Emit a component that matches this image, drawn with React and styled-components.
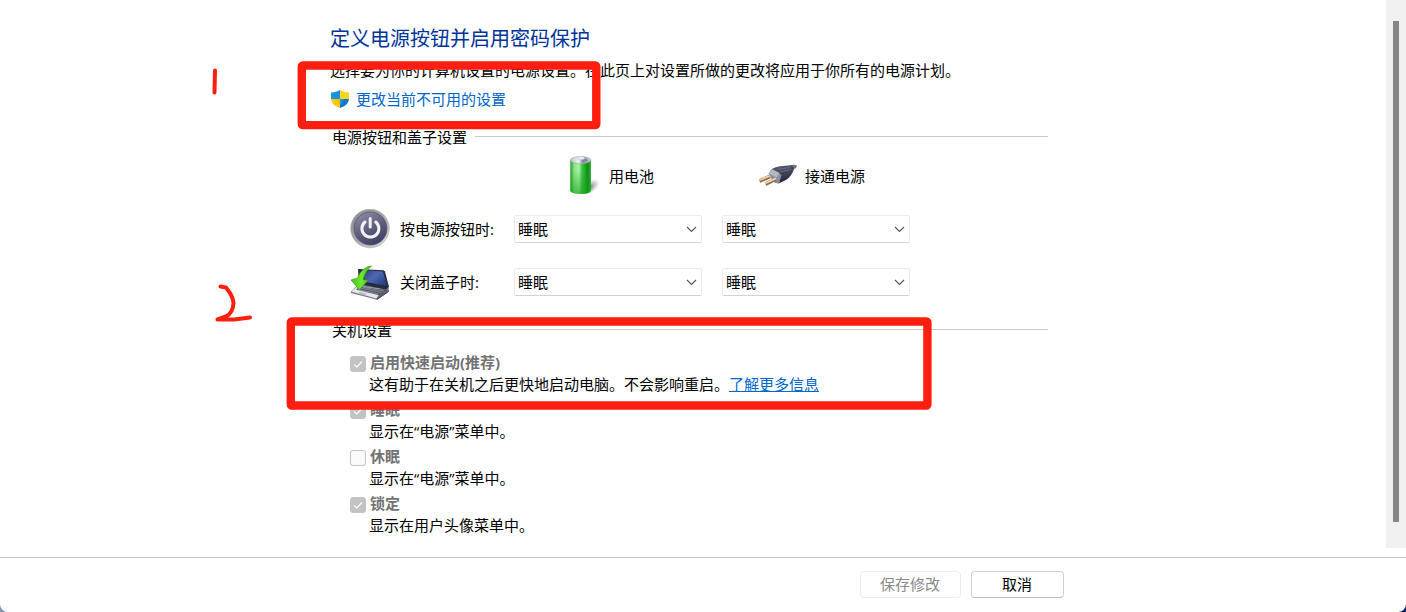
import React, { useId } from "react";
import styled, { createGlobalStyle } from "styled-components";

const GlobalStyle = createGlobalStyle`
  * { box-sizing: border-box; }
  body {
    margin: 0;
    background: linear-gradient(90deg, #8496ab 0 50%, #0b2268 50% 100%);
    color: #000;
    font-family: "Open Sans", "Noto Sans CJK SC", sans-serif;
    font-size: 15px;
    line-height: 20px;
  }
  button, select { font: inherit; }
  h1, h2, p { margin: 0; font-weight: 400; }
`;

const Window = styled.div`
  position: relative;
  display: flex;
  flex-direction: column;
  min-height: 100vh;
  background: #fff;
  border-radius: 0 0 8px 8px;
  overflow: hidden;
`;

const Body = styled.div`
  flex: 1;
  display: flex;
  margin-bottom: 9px;
`;

const Content = styled.main`
  flex: 1;
  padding: 25px 20px 12px 330px;
`;

const Column = styled.div`
  max-width: 718px;
`;

const ScrollTrack = styled.div`
  width: 20px;
  padding: 21px 7px 26px;
  background: #f0f0f0;
  display: flex;
`;

const ScrollThumb = styled.div`
  flex: 1;
  background: #858585;
`;

const Title = styled.h1`
  font-size: 20px;
  line-height: 28px;
  color: #003399;
`;

const Intro = styled.p`
  margin-top: 7px;
  white-space: nowrap;
`;

const AdminLink = styled.a`
  display: flex;
  align-items: center;
  gap: 6px;
  width: max-content;
  margin-top: 9px;
  color: #0066cc;
  text-decoration: none;
`;

const SectionTitle = styled.h2`
  display: flex;
  gap: 8px;
  margin-top: 18px;
  padding-left: 2px;
  font-size: 15px;
  line-height: 20px;

  &::after {
    content: "";
    flex: 1;
    height: 1px;
    margin-top: 9px;
    background: #cacaca;
  }
`;

const PowerGrid = styled.div`
  display: grid;
  grid-template-columns: 144px 188px 188px;
  grid-template-rows: 40px 40px 40px;
  column-gap: 20px;
  row-gap: 13px;
  align-items: center;
  margin-top: 9px;
  padding-left: 20px;
`;

const SourceHeading = styled.div`
  grid-column: ${(p) => p.$column};
  display: flex;
  align-items: center;
  gap: 7px;
  padding-left: ${(p) => p.$indent}px;
`;

const ActionLabel = styled.div`
  display: flex;
  align-items: center;
  gap: 10px;
  white-space: nowrap;
`;

const SelectBox = styled.div`
  display: grid;
  align-items: center;

  & > * { grid-area: 1 / 1; }
  & > svg { justify-self: end; margin-right: 5px; pointer-events: none; }
`;

const Select = styled.select`
  appearance: none;
  width: 100%;
  height: 28px;
  padding: 0 24px 0 3px;
  border: 1px solid #ececec;
  border-bottom-color: #d2d2d2;
  border-radius: 2px;
  background: #fff;
  color: #000;
`;

const OptionList = styled.div`
  display: grid;
  gap: 4px;
  margin-top: 12px;
  padding-left: 20px;
`;

const Option = styled.div`
  display: grid;
  grid-template-columns: 16px 1fr;
  column-gap: 4px;
  row-gap: 1px;
  align-items: center;
  line-height: 21px;
`;

const Checkbox = styled.input`
  appearance: none;
  width: 16px;
  height: 16px;
  margin: 2px 0 0;
  border: 1px solid #c3c3c3;
  border-radius: 3px;
  background: #fafafa;
  grid-area: 1 / 1;

  &:checked { background: #c3c3c3; }
`;

const Tick = styled.svg`
  grid-area: 1 / 1;
  margin-top: 2px;
  pointer-events: none;
`;

const OptionLabel = styled.label`
  grid-area: 1 / 2;
  color: #737373;
  font-weight: 700;
`;

const OptionNote = styled.p`
  grid-column: 2;
  margin-left: -1px;
`;

const TextLink = styled.a`
  color: #0066cc;
  text-decoration: underline;
`;

const Footer = styled.footer`
  display: flex;
  gap: 10px;
  padding: 13px 342px 14px 0;
  justify-content: flex-end;
  border-top: 1px solid #cacaca;
`;

const Button = styled.button`
  width: ${(p) => p.$width}px;
  height: 27px;
  padding: 0 1px 2px 0;
  border: 1px solid #d0d0d0;
  border-bottom-color: #bababa;
  border-radius: 4px;
  background: #fff;
  color: #000;

  &:disabled {
    border-color: #ededed;
    color: #8a8a8a;
  }
`;

const Marks = styled.svg`
  position: absolute;
  top: 0;
  left: 0;
  pointer-events: none;
`;

function ShieldIcon() {
  return (
    <svg width="20" height="20" viewBox="0 0 20 20" aria-hidden="true">
      <path d="M10 1C7.500 2.700 4.500 3.400 1 3.400V10H10Z" fill="#1593dc" />
      <path d="M10 1C12.500 2.700 15.500 3.400 19 3.400V10H10Z" fill="#ffd51c" />
      <path d="M1 10C1.600 14.500 5 17.500 10 19V10Z" fill="#ffc91a" />
      <path d="M19 10C18.400 14.500 15 17.500 10 19V10Z" fill="#0f79c8" />
      <path d="M10 10H14.500L10 17Z" fill="#35a8ea" opacity=".5" />
      <path d="M10 10H5L10 17Z" fill="#f5b400" opacity=".6" />
    </svg>
  );
}

function BatteryIcon() {
  return (
    <svg width="40" height="40" viewBox="0 0 40 40" aria-hidden="true">
      <defs>
        <linearGradient id="cell">
          <stop offset="0" stopColor="#2c9a32" />
          <stop offset=".2" stopColor="#8be68a" />
          <stop offset=".42" stopColor="#a9f2a5" />
          <stop offset=".55" stopColor="#45c748" />
          <stop offset=".85" stopColor="#0b8a12" />
          <stop offset="1" stopColor="#3cb83e" />
        </linearGradient>
        <linearGradient id="cellShade" x2="0" y2="1">
          <stop offset=".3" stopColor="#18a51d" stopOpacity="0" />
          <stop offset="1" stopColor="#18a51d" stopOpacity=".65" />
        </linearGradient>
        <linearGradient id="cap">
          <stop offset="0" stopColor="#b9bcc6" />
          <stop offset=".4" stopColor="#f5f5fa" />
          <stop offset=".6" stopColor="#9295ab" />
          <stop offset="1" stopColor="#d2d4df" />
        </linearGradient>
        <radialGradient id="cellShadow">
          <stop offset="0" stopColor="#555" stopOpacity=".8" />
          <stop offset="1" stopColor="#888" stopOpacity="0" />
        </radialGradient>
      </defs>
      <ellipse cx="28" cy="31" rx="11" ry="6" fill="url(#cellShadow)" transform="rotate(-35 28 31)" />
      <path d="M8.300 4V35Q10 38 18.500 38T29 35V4Z" fill="url(#cell)" />
      <path d="M8.300 4V35Q10 38 18.500 38T29 35V4Z" fill="url(#cellShade)" />
      <ellipse cx="18.600" cy="4" rx="10.300" ry="3.500" fill="url(#cap)" stroke="#a3aaa8" strokeWidth=".6" />
      <path d="M15.500 1Q18.500-.5 22.500 1V3Q18.500 4.500 15.500 3Z" fill="#e9eaf2" stroke="#a6a8b8" strokeWidth=".4" />
      <path d="M19.500 5L24.500 2.300L26.500 4.800L21.500 6.700Z" fill="#777b99" opacity=".7" />
    </svg>
  );
}

function PlugIcon() {
  return (
    <svg width="40" height="40" viewBox="0 0 40 40" aria-hidden="true">
      <defs>
        <linearGradient id="plug" x1=".3" y1="0" x2=".6" y2="1">
          <stop offset="0" stopColor="#5c6075" />
          <stop offset=".5" stopColor="#3f4257" />
          <stop offset="1" stopColor="#202234" />
        </linearGradient>
      </defs>
      <path d="M31 10Q35 8 39 9.500L38 12L33 15Z" fill="#747474" />
      <path d="M13 13.500Q17 10.500 24 10L33 9.200Q36.500 10 36 13Q34 20 28 24L20.500 27.500L17 20Z" fill="url(#plug)" />
      <path d="M10.500 17.500L13.500 13L18.500 15.500L23.500 19L21 27.500L17 27L13 22Z" fill="#8b8fa1" />
      <path d="M10.500 17.500L13.500 13L21.500 17L18.500 21.500Z" fill="#b3b6c5" />
      <path d="M1.500 25L12 20.500" stroke="#8a6040" strokeWidth="3.600" />
      <path d="M1.200 24.300L12 19.800" stroke="#ecd0a2" strokeWidth="1.900" />
      <path d="M7.500 28.200L18 23" stroke="#8a6040" strokeWidth="3.600" />
      <path d="M7.200 27.500L18 22.300" stroke="#f0d5aa" strokeWidth="1.900" />
      <path d="M20 13.500L32 11.500M22 16L33 13.500" stroke="#858aa0" strokeWidth=".7" opacity=".7" />
    </svg>
  );
}

function PowerIcon() {
  return (
    <svg width="40" height="40" viewBox="0 0 40 40" aria-hidden="true">
      <defs>
        <linearGradient id="rim" x2="1" y2="1">
          <stop offset="0" stopColor="#858585" />
          <stop offset=".5" stopColor="#a8a8a8" />
          <stop offset="1" stopColor="#e2e2e2" />
        </linearGradient>
        <linearGradient id="face" x1=".2" y1="0" x2=".7" y2="1">
          <stop offset="0" stopColor="#8b8ba7" />
          <stop offset=".5" stopColor="#60607f" />
          <stop offset="1" stopColor="#3d3d62" />
        </linearGradient>
      </defs>
      <circle cx="20" cy="19.500" r="19.300" fill="url(#rim)" stroke="#aaa" strokeWidth=".6" />
      <circle cx="20.500" cy="19.500" r="16.500" fill="url(#face)" stroke="#555573" strokeWidth=".8" />
      <path d="M15 13A8.500 8.500 0 1 0 25.800 13M20.200 9.500V18" fill="none" stroke="#f3f3f7" strokeWidth="3" strokeLinecap="round" />
    </svg>
  );
}

function LidIcon() {
  return (
    <svg width="40" height="40" viewBox="0 0 40 40" aria-hidden="true">
      <defs>
        <linearGradient id="lid" x1="0" y1="0" x2="1" y2=".8">
          <stop offset="0" stopColor="#2b3c6c" />
          <stop offset=".5" stopColor="#4e68b5" />
          <stop offset="1" stopColor="#263c7c" />
        </linearGradient>
        <linearGradient id="arrow">
          <stop offset="0" stopColor="#45be20" />
          <stop offset=".5" stopColor="#6fe82d" />
          <stop offset="1" stopColor="#3aae1c" />
        </linearGradient>
      </defs>
      <path d="M.800 29.500L9 22L38.700 26V29.500L27 37.800L1 31Z" fill="#777c88" />
      <path d="M1 29.500L8 24L32 27L26.500 36.500Z" fill="#e4e6ec" />
      <path d="M10 24.500L37.500 28L30 33.500L6 27.500Z" fill="#50555f" />
      <path d="M10 26L32 30.500M8 27.500L29 32M13 25.300L34 29" stroke="#a3a8b2" strokeWidth=".6" />
      <path d="M10 30L17 31.800L14 33.300L7.500 31.500Z" fill="#b7bbc6" />
      <path d="M26.500 36.500L38.700 28V30L27 38Z" fill="#4c515e" />
      <path d="M8 7L33.500 8.300L35 9.500L39 25L36 27.500L9 22Z" fill="#262c40" />
      <path d="M12 8L33 9.500L37 24L16 20Z" fill="url(#lid)" />
      <path d="M21.700 4Q12 4.500 7.500 16L1 18L9.300 27.700L18 18.500L13.300 17.500Q15 9 21.700 4Z" fill="url(#arrow)" stroke="#2f9a18" strokeWidth=".6" strokeLinejoin="round" />
    </svg>
  );
}

function ActionSelect({ label }) {
  return (
    <SelectBox>
      <Select aria-label={label} defaultValue="sleep">
        <option value="none">不采取任何操作</option>
        <option value="sleep">睡眠</option>
        <option value="hibernate">休眠</option>
        <option value="off">关机</option>
      </Select>
      <svg width="11" height="7" viewBox="0 0 11 7" aria-hidden="true">
        <path d="M1 1L5.500 5.500L10 1" fill="none" stroke="#555" strokeWidth="1.100" />
      </svg>
    </SelectBox>
  );
}

function ShutdownOption({ label, checked, children }) {
  const id = useId();
  return (
    <Option>
      <Checkbox type="checkbox" id={id} defaultChecked={checked} disabled />
      {checked && (
        <Tick width="16" height="16" viewBox="0 0 16 16" aria-hidden="true">
          <path d="M4 8.300L6.800 11L12 5.500" fill="none" stroke="#fff" strokeWidth="1.100" />
        </Tick>
      )}
      <OptionLabel htmlFor={id}>{label}</OptionLabel>
      <OptionNote>{children}</OptionNote>
    </Option>
  );
}

export default function App() {
  return (
    <>
      <GlobalStyle />
      <Window>
        <Body>
          <Content>
            <Column>
              <Title>定义电源按钮并启用密码保护</Title>
              <Intro>选择要为你的计算机设置的电源设置。在此页上对设置所做的更改将应用于你所有的电源计划。</Intro>
              <AdminLink href="#settings">
                <ShieldIcon />
                更改当前不可用的设置
              </AdminLink>

              <SectionTitle>电源按钮和盖子设置</SectionTitle>
              <PowerGrid id="settings">
                <SourceHeading $column={2} $indent={48}>
                  <BatteryIcon />
                  用电池
                </SourceHeading>
                <SourceHeading $column={3} $indent={36}>
                  <PlugIcon />
                  接通电源
                </SourceHeading>

                <ActionLabel><PowerIcon />按电源按钮时:</ActionLabel>
                <ActionSelect label="按电源按钮时:用电池" />
                <ActionSelect label="按电源按钮时:接通电源" />

                <ActionLabel><LidIcon />关闭盖子时:</ActionLabel>
                <ActionSelect label="关闭盖子时:用电池" />
                <ActionSelect label="关闭盖子时:接通电源" />
              </PowerGrid>

              <SectionTitle>关机设置</SectionTitle>
              <OptionList>
                <ShutdownOption label="启用快速启动(推荐)" checked>
                  这有助于在关机之后更快地启动电脑。不会影响重启。<TextLink href="#more">了解更多信息</TextLink>
                </ShutdownOption>
                <ShutdownOption label="睡眠" checked>显示在“电源”菜单中。</ShutdownOption>
                <ShutdownOption label="休眠">显示在“电源”菜单中。</ShutdownOption>
                <ShutdownOption label="锁定" checked>显示在用户头像菜单中。</ShutdownOption>
              </OptionList>
            </Column>
          </Content>
          <ScrollTrack><ScrollThumb /></ScrollTrack>
        </Body>
        <Footer>
          <Button type="button" $width={101} disabled>保存修改</Button>
          <Button type="button" $width={93}>取消</Button>
        </Footer>

        <Marks width="940" height="420" viewBox="0 0 940 420" fill="none" stroke="#ff1e10" strokeLinecap="round" strokeLinejoin="round" aria-hidden="true">
          <rect x="301.800" y="65.500" width="294.500" height="59.600" rx="1" strokeWidth="8.400" />
          <rect x="290.800" y="321.500" width="636.600" height="84" rx="1" strokeWidth="8.400" />
          <path d="M215 70.500L214.500 92.500" strokeWidth="4" />
          <path d="M220.500 286.500L226 287.500Q233 296 233.500 303Q233 313 226 316.500L217.500 319.500H234L250 317.500" strokeWidth="4" />
        </Marks>
      </Window>
    </>
  );
}
